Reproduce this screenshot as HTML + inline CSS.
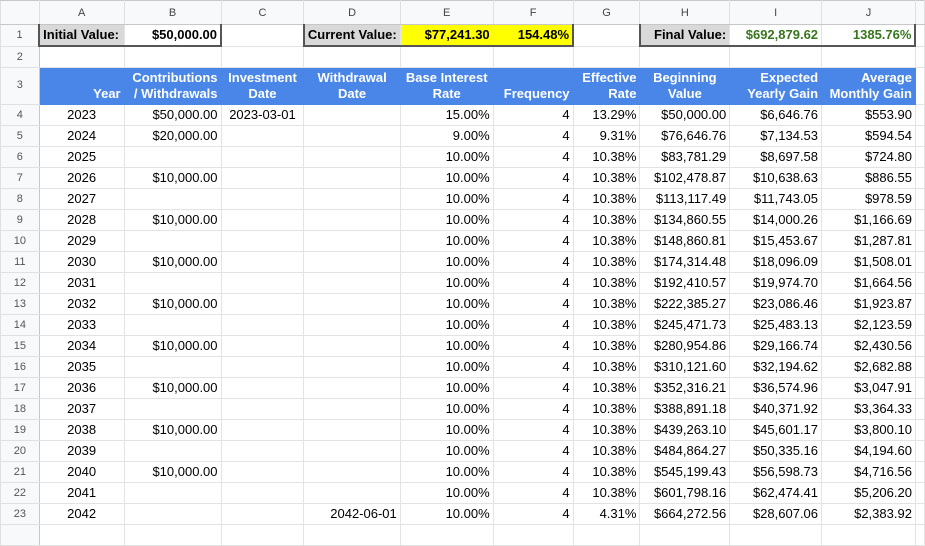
<!DOCTYPE html>
<html><head><meta charset="utf-8"><style>
body{margin:0;background:#fff;width:925px;height:530px;overflow:hidden;font-family:"Liberation Sans",Arial,sans-serif;}
table{border-collapse:collapse;table-layout:fixed;font-size:13px;color:#000;}
td{border:1px solid #e2e3e3;padding:0 3px;white-space:nowrap;overflow:hidden;text-align:right;height:20px;line-height:20px;}
tr.h td{background:#f8f9fa;color:#444;font-size:11px;text-align:center;height:23px;border-color:#c7c7c7 #e0e0e0;}
td.rn{background:#f8f9fa;color:#555;font-size:11px;text-align:center;border-color:#e0e0e0 #c7c7c7 #e0e0e0 #e0e0e0;}
tr.r1 td{height:20px;}
tr.r2 td{height:20px;}
tr.r3 td{height:34px;line-height:16px;background:#4a86e8;color:#fff;font-weight:bold;vertical-align:bottom;padding-bottom:2px;border-color:#4a86e8;}
tr.r3 td.rn{background:#f8f9fa;color:#555;font-weight:normal;vertical-align:middle;border-color:#e0e0e0 #c7c7c7 #e0e0e0 #e0e0e0;line-height:20px;}
.c{text-align:center}
.lab{background:#d9d9d9;font-weight:bold;border-bottom:2px solid #555 !important;}
.b{font-weight:bold;border-bottom:2px solid #555 !important;}
.y{background:#ffff00;font-weight:bold;border-bottom:2px solid #555 !important;}
.g{color:#38761d;font-weight:bold;border-bottom:2px solid #555 !important;}
</style></head><body>
<table>
<colgroup><col style="width:39px"><col style="width:85px"><col style="width:97px"><col style="width:83px"><col style="width:96px"><col style="width:93px"><col style="width:80px"><col style="width:67px"><col style="width:90px"><col style="width:92px"><col style="width:94px"><col style="width:9px"></colgroup>
<tr class="h"><td></td><td>A</td><td>B</td><td>C</td><td>D</td><td>E</td><td>F</td><td>G</td><td>H</td><td>I</td><td>J</td><td></td></tr>
<tr class="r1"><td class="rn">1</td><td class="lab" style="text-align:left;border-left:2px solid #555">Initial Value:</td><td class="b" style="border-right:2px solid #555">$50,000.00</td><td></td><td class="lab" style="text-align:left;border-left:2px solid #555">Current Value:</td><td class="y">$77,241.30</td><td class="y" style="border-right:2px solid #555">154.48%</td><td></td><td class="lab" style="border-left:2px solid #555">Final Value:</td><td class="g">$692,879.62</td><td class="g" style="border-right:2px solid #555">1385.76%</td><td></td></tr>
<tr class="r2"><td class="rn">2</td><td></td><td></td><td></td><td></td><td></td><td></td><td></td><td></td><td></td><td></td><td></td></tr>
<tr class="r3"><td class="rn">3</td><td>Year</td><td>Contributions<br>/ Withdrawals</td><td class="c">Investment<br>Date</td><td class="c">Withdrawal<br>Date</td><td class="c">Base Interest<br>Rate</td><td>Frequency</td><td>Effective<br>Rate</td><td class="c">Beginning<br>Value</td><td>Expected<br>Yearly Gain</td><td>Average<br>Monthly Gain</td><td style="background:#fff;border-color:#e2e3e3"></td></tr>
<tr><td class="rn">4</td><td class="c">2023</td><td>$50,000.00</td><td class="c">2023-03-01</td><td></td><td>15.00%</td><td>4</td><td>13.29%</td><td>$50,000.00</td><td>$6,646.76</td><td>$553.90</td><td></td></tr>
<tr><td class="rn">5</td><td class="c">2024</td><td>$20,000.00</td><td></td><td></td><td>9.00%</td><td>4</td><td>9.31%</td><td>$76,646.76</td><td>$7,134.53</td><td>$594.54</td><td></td></tr>
<tr><td class="rn">6</td><td class="c">2025</td><td></td><td></td><td></td><td>10.00%</td><td>4</td><td>10.38%</td><td>$83,781.29</td><td>$8,697.58</td><td>$724.80</td><td></td></tr>
<tr><td class="rn">7</td><td class="c">2026</td><td>$10,000.00</td><td></td><td></td><td>10.00%</td><td>4</td><td>10.38%</td><td>$102,478.87</td><td>$10,638.63</td><td>$886.55</td><td></td></tr>
<tr><td class="rn">8</td><td class="c">2027</td><td></td><td></td><td></td><td>10.00%</td><td>4</td><td>10.38%</td><td>$113,117.49</td><td>$11,743.05</td><td>$978.59</td><td></td></tr>
<tr><td class="rn">9</td><td class="c">2028</td><td>$10,000.00</td><td></td><td></td><td>10.00%</td><td>4</td><td>10.38%</td><td>$134,860.55</td><td>$14,000.26</td><td>$1,166.69</td><td></td></tr>
<tr><td class="rn">10</td><td class="c">2029</td><td></td><td></td><td></td><td>10.00%</td><td>4</td><td>10.38%</td><td>$148,860.81</td><td>$15,453.67</td><td>$1,287.81</td><td></td></tr>
<tr><td class="rn">11</td><td class="c">2030</td><td>$10,000.00</td><td></td><td></td><td>10.00%</td><td>4</td><td>10.38%</td><td>$174,314.48</td><td>$18,096.09</td><td>$1,508.01</td><td></td></tr>
<tr><td class="rn">12</td><td class="c">2031</td><td></td><td></td><td></td><td>10.00%</td><td>4</td><td>10.38%</td><td>$192,410.57</td><td>$19,974.70</td><td>$1,664.56</td><td></td></tr>
<tr><td class="rn">13</td><td class="c">2032</td><td>$10,000.00</td><td></td><td></td><td>10.00%</td><td>4</td><td>10.38%</td><td>$222,385.27</td><td>$23,086.46</td><td>$1,923.87</td><td></td></tr>
<tr><td class="rn">14</td><td class="c">2033</td><td></td><td></td><td></td><td>10.00%</td><td>4</td><td>10.38%</td><td>$245,471.73</td><td>$25,483.13</td><td>$2,123.59</td><td></td></tr>
<tr><td class="rn">15</td><td class="c">2034</td><td>$10,000.00</td><td></td><td></td><td>10.00%</td><td>4</td><td>10.38%</td><td>$280,954.86</td><td>$29,166.74</td><td>$2,430.56</td><td></td></tr>
<tr><td class="rn">16</td><td class="c">2035</td><td></td><td></td><td></td><td>10.00%</td><td>4</td><td>10.38%</td><td>$310,121.60</td><td>$32,194.62</td><td>$2,682.88</td><td></td></tr>
<tr><td class="rn">17</td><td class="c">2036</td><td>$10,000.00</td><td></td><td></td><td>10.00%</td><td>4</td><td>10.38%</td><td>$352,316.21</td><td>$36,574.96</td><td>$3,047.91</td><td></td></tr>
<tr><td class="rn">18</td><td class="c">2037</td><td></td><td></td><td></td><td>10.00%</td><td>4</td><td>10.38%</td><td>$388,891.18</td><td>$40,371.92</td><td>$3,364.33</td><td></td></tr>
<tr><td class="rn">19</td><td class="c">2038</td><td>$10,000.00</td><td></td><td></td><td>10.00%</td><td>4</td><td>10.38%</td><td>$439,263.10</td><td>$45,601.17</td><td>$3,800.10</td><td></td></tr>
<tr><td class="rn">20</td><td class="c">2039</td><td></td><td></td><td></td><td>10.00%</td><td>4</td><td>10.38%</td><td>$484,864.27</td><td>$50,335.16</td><td>$4,194.60</td><td></td></tr>
<tr><td class="rn">21</td><td class="c">2040</td><td>$10,000.00</td><td></td><td></td><td>10.00%</td><td>4</td><td>10.38%</td><td>$545,199.43</td><td>$56,598.73</td><td>$4,716.56</td><td></td></tr>
<tr><td class="rn">22</td><td class="c">2041</td><td></td><td></td><td></td><td>10.00%</td><td>4</td><td>10.38%</td><td>$601,798.16</td><td>$62,474.41</td><td>$5,206.20</td><td></td></tr>
<tr><td class="rn">23</td><td class="c">2042</td><td></td><td></td><td>2042-06-01</td><td>10.00%</td><td>4</td><td>4.31%</td><td>$664,272.56</td><td>$28,607.06</td><td>$2,383.92</td><td></td></tr>
<tr><td class="rn"></td><td></td><td></td><td></td><td></td><td></td><td></td><td></td><td></td><td></td><td></td><td></td></tr>
</table>
</body></html>
